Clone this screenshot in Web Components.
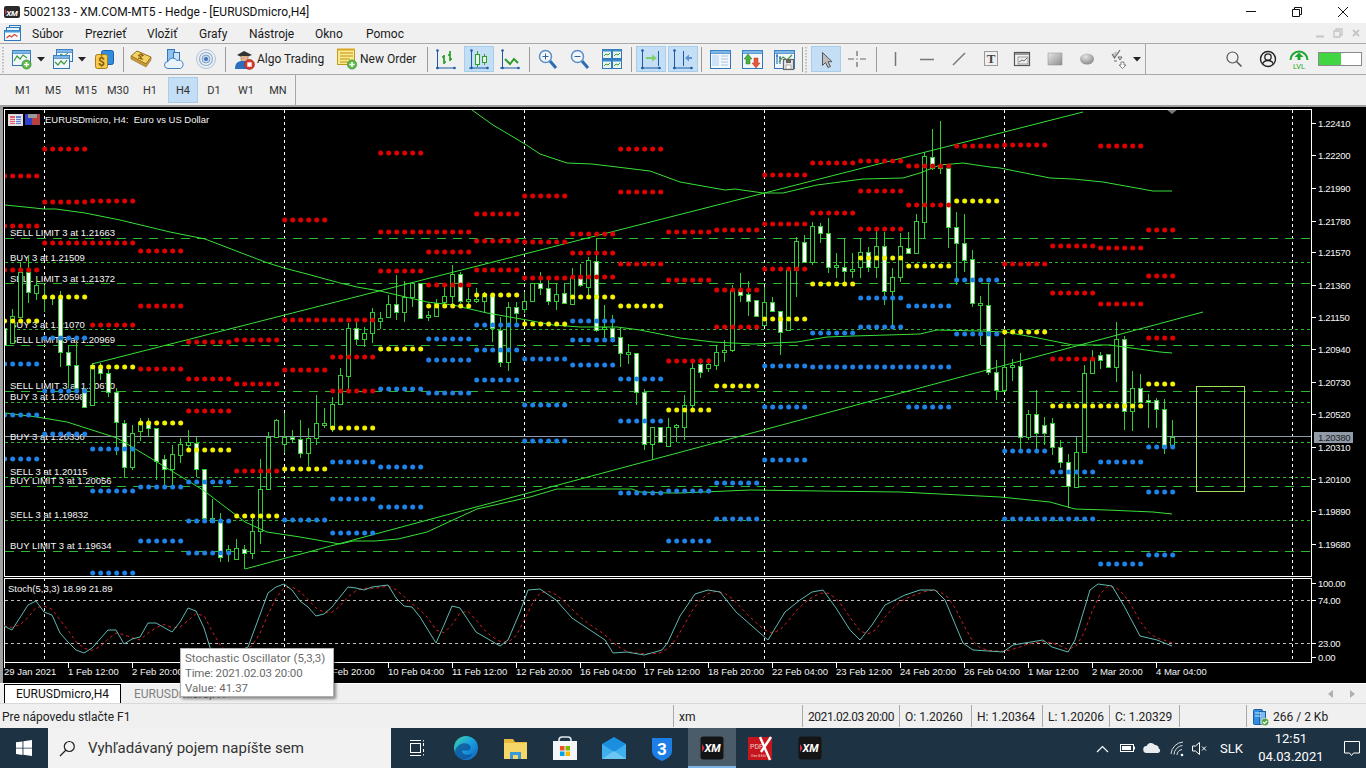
<!DOCTYPE html>
<html lang="sk">
<head>
<meta charset="utf-8">
<title>XM.COM-MT5</title>
<style>
html,body{margin:0;padding:0;width:1366px;height:768px;overflow:hidden;background:#f0f0f0;font-family:Roboto,"Noto Sans",sans-serif;}
#app{display:flex;flex-direction:column;width:1366px;height:768px;}
</style>
</head>
<body>
<div id="app">
  <title-bar></title-bar>
  <menu-bar></menu-bar>
  <tool-bar></tool-bar>
  <tf-bar></tf-bar>
  <mt-chart></mt-chart>
  <tab-bar></tab-bar>
  <status-bar></status-bar>
  <task-bar></task-bar>
</div>
<script>
const UI='Roboto,"Noto Sans",sans-serif';
const CH='"Liberation Sans",sans-serif';

/* ---------- icons ---------- */
const grad=(id,a,b)=>`<defs><linearGradient id="${id}" x1="0" y1="0" x2="1" y2="1"><stop offset="0" stop-color="${a}"/><stop offset="1" stop-color="${b}"/></linearGradient></defs>`;
const axes=(x=3,y=19.5,c='#1c5aa6')=>`<path d="M${x}.5 2V${y}M1 ${y}H20" stroke="${c}" fill="none"/><circle cx="${x+.5}" cy="2.5" r="1.3" fill="${c}"/><circle cx="${x+.5}" cy="${y}" r="1.3" fill="${c}"/><circle cx="19.5" cy="${y}" r="1.3" fill="${c}"/>`;
const plus=(x,y)=>`<circle cx="${x}" cy="${y}" r="4.6" fill="#5cb948" stroke="#3f8f30" stroke-width=".7"/><path d="M${x-2.6} ${y}h5.2M${x} ${y-2.6}v5.2" stroke="#fff" stroke-width="1.6"/>`;
const win=(x,y,w,h,c='#2f76bb')=>`<rect x="${x+.5}" y="${y+.5}" width="${w}" height="${h}" fill="#f2f7fc" stroke="${c}"/><rect x="${x+.5}" y="${y+.5}" width="${w}" height="3" fill="#7db7e6" stroke="${c}" stroke-width=".6"/>`;
const I={
 newchart:`${win(1,2,18,15)}<path d="M3 13l3-5 3 3 3-4 4 3" stroke="#3d9a3a" fill="none" stroke-width="1.2"/>${plus(15.5,16.5)}`,
 profiles:`${win(4,1,16,12)}<path d="M6 9l3-3 3 2 4-3" stroke="#3d9a3a" fill="none"/>${win(1,7,16,13)}<path d="M3 14l3 3 3-4 3 3 3-4" stroke="#3d9a3a" fill="none" stroke-width="1.2"/>`,
 market:`<rect x="8.5" y="2.5" width="12" height="14" rx="2" fill="#2f8ee0" stroke="#1b5fa6"/><rect x="2.5" y="6.5" width="12" height="14" rx="2" fill="#f6cb52" stroke="#a97b12"/><text x="8.5" y="18" font-size="12" font-weight="700" text-anchor="middle" fill="#8a5c00" font-family="${CH}">$</text>`,
 book:`<path d="M1 8L7 3l14 6-5 7z" fill="#f3d264" stroke="#94701c"/><path d="M1 8l15 8 5-7v3l-5 7L1 11z" fill="#c9983a" stroke="#94701c" stroke-width=".6"/><path d="M8 8l3-2 2 1.500-3 1 2 2.500-4-1" stroke="#8a5a10" fill="none" stroke-width="1.2"/>`,
 cloud:`<rect x="4.5" y="1.5" width="7" height="12" fill="#8ec0ee" stroke="#2f76bb"/><rect x="10.5" y="4.5" width="6" height="10" fill="#cfe3f7" stroke="#2f76bb"/><path d="M5 20.5a3.5 3.5 0 0 1 0-7 5 5 0 0 1 9-1 4 4 0 0 1 3.5 8z" fill="#eaf3fb" stroke="#3f83c4"/>`,
 signal:`<circle cx="11" cy="11" r="9.5" fill="none" stroke="#a9c3e0"/><circle cx="11" cy="11" r="6.5" fill="none" stroke="#8fb0d6" stroke-width="1.2"/><circle cx="11" cy="11" r="4" fill="#c6d8ec" stroke="#7f9fc9"/><circle cx="11" cy="11" r="2" fill="#3d73b8"/>`,
 algo:`<path d="M4 7l7-4 8 4-8 3z" fill="#333"/><path d="M8 8v4a4 4 0 0 0 7 0V8" fill="#e0b48a" stroke="#8a6a4a" stroke-width=".5"/><path d="M2 21c0-6 3-8 7-8h3c3 0 5 2 5 8z" fill="#2c6fc0"/><circle cx="16.5" cy="16.5" r="5" fill="#d33a2c" stroke="#a32417" stroke-width=".6"/><rect x="14.3" y="14.3" width="4.4" height="4.4" fill="#fff"/>`,
 order:`<rect x="1.5" y="1.5" width="17" height="15" fill="#fbe98c" stroke="#c29a1c"/><path d="M4 5h13M4 8h13M4 11h10M4 14h8" stroke="#b9911a"/><path d="M1 1.5h18" stroke="#d9a820" stroke-width="2"/>${plus(16,16.5)}`,
 bars:`${axes(2,20)}<path d="M9 7v9M7 9h2M9 14h2M15 3v10M13 7h2M15 11h2" stroke="#1d9a1d" stroke-width="1.6" fill="none"/>`,
 candles:`${axes(3,20)}<path d="M9.500 3v16M16.500 6v11" stroke="#2d9d2d"/><rect x="7.500" y="6.500" width="4" height="10" fill="#eaf6ea" stroke="#2d9d2d"/><rect x="14.500" y="8.500" width="4" height="6" fill="#eaf6ea" stroke="#2d9d2d"/>`,
 line:`${axes(3,20)}<path d="M6 11l5 5 4-5 4 4" stroke="#2d9d2d" stroke-width="2" fill="none"/>`,
 zin:`<path d="M13 13l6 7" stroke="#2b6cb6" stroke-width="3"/><circle cx="8.500" cy="8.500" r="6" fill="#f0f6fc" stroke="#5a8fc5" stroke-width="1.5"/><path d="M5.500 8.500h6M8.500 5.500v6" stroke="#3a5f8a"/>`,
 zout:`<path d="M13 13l6 7" stroke="#2b6cb6" stroke-width="3"/><circle cx="8.500" cy="8.500" r="6" fill="#f0f6fc" stroke="#5a8fc5" stroke-width="1.500"/><path d="M5.500 8.500h6" stroke="#3a5f8a"/>`,
 tile:`<g>${[[1,1],[11,1],[1,11],[11,11]].map(([x,y])=>`<rect x="${x+.5}" y="${y+.5}" width="9" height="9" fill="#eaf4ec" stroke="#2f76bb"/><rect x="${x+.5}" y="${y+.5}" width="9" height="2" fill="#3b8ac9"/><path d="M${x+2} ${y+7}l2-2 2 1 2-2" stroke="#3d9a3a" fill="none"/>`).join('')}</g>`,
 auto:`${axes(2,20)}<path d="M18.500 3v15" stroke="#1c5aa6"/><path d="M6 9h6V6.500l5 3.500-5 3.500V11H6z" fill="#7fd06a"/>`,
 shift:`${axes(2,20)}<path d="M11.500 3v15" stroke="#1c5aa6"/><path d="M20 9h-3V6.500L13 10l4 3.500V11h3z" fill="#5a94d8"/>`,
 data:`${win(1,2,20,18)}<rect x="3" y="7" width="7" height="11" fill="#cfe3f7"/><path d="M12 8h7M12 11h7M12 14h7M12 17h7" stroke="#a8c4de"/>`,
 updown:`${win(1,2,20,18)}<path d="M5 16v-5H3l4-5 4 5H9v5z" fill="#4fae3c" stroke="#2e7d22" stroke-width=".5"/><path d="M13 10v5h-2l4 5 4-5h-2v-5z" fill="#e8563a" stroke="#b23a22" stroke-width=".5"/>`,
 save:`${win(1,2,20,18)}<path d="M4 6v10M3 8h2M7 8v8M6 10h2" stroke="#1c5aa6" fill="none"/><path d="M6 14l4-5 4 3 5-5" stroke="#3d9a3a" fill="none" stroke-width="1.2"/><rect x="10.500" y="11.500" width="10" height="10" fill="#e8e8e8" stroke="#666" stroke-width="1.200"/><rect x="13" y="12" width="5" height="3" fill="#666"/><rect x="13" y="17" width="5" height="4" fill="#fff" stroke="#666" stroke-width=".5"/>`,
 cursor:`<path d="M7.500 4.500v13l3-3 2.500 5 2.500-1-2.500-4.800h4z" fill="#bdbdbd" stroke="#555"/>`,
 cross:`<path d="M11 3v5M11 14v5M2 11h6M14 11h6" stroke="#666" stroke-width="1.200"/><path d="M11 10v2" stroke="#888"/>`,
 vline:`<path d="M11.500 4v14" stroke="#777" stroke-width="1.500"/>`,
 hline:`<path d="M4 11.500h14" stroke="#777" stroke-width="1.500"/>`,
 trend:`<path d="M5 17L17 5" stroke="#777" stroke-width="1.500"/>`,
 ttext:`<rect x="4.500" y="3.500" width="13" height="14" fill="none" stroke="#444" stroke-dasharray="1 1"/><text x="11" y="15" font-size="13" font-weight="700" text-anchor="middle" fill="#444" font-family="'Liberation Serif',serif">T</text>`,
 label:`<rect x="2.500" y="4.500" width="15" height="13" fill="#f4f4f4" stroke="#555" stroke-width="1.200"/><rect x="3" y="5" width="14" height="2" fill="#999"/><rect x="6" y="9" width="10" height="7" fill="#eee" stroke="#666" stroke-width=".6"/><path d="M7 14l3-2 2 1 3-3" stroke="#333" fill="none" stroke-width=".7"/>`,
 rect:`${grad('rg','#e6e6e6','#8d8d8d')}<rect x="4" y="5" width="14" height="12" fill="url(#rg)" stroke="#8a8a8a" stroke-width=".5"/>`,
 ellipse:`<defs><radialGradient id="eg" cx=".4" cy=".3" r=".8"><stop offset="0" stop-color="#e4e4e4"/><stop offset="1" stop-color="#808080"/></radialGradient></defs><ellipse cx="11" cy="11" rx="7" ry="5.500" fill="url(#eg)"/>`,
 arrows:`<path d="M4 6l2.500 4L12 2" stroke="#666" fill="none" stroke-width="1.100"/><path d="M10 9l2 3 2-3z M6 13h3" stroke="#666" fill="none"/><path d="M13 17v-3h3v3h2l-3.500 3.500L11 17z" fill="#fff" stroke="#666" stroke-width=".8"/><path d="M7 9v-3h3v0l-1.500-2L5 6z" fill="none" stroke="#888" stroke-width=".6"/>`,
 caret:`<path d="M1 9h8l-4 4.500z" fill="#222"/>`,
 grip:`<path d="M1 3v26" stroke="#b0b0b0" stroke-dasharray="1.500 1.500" stroke-width="1.500" fill="none"/>`,
 search:`<circle cx="9.500" cy="9.500" r="5.500" fill="none" stroke="#555" stroke-width="1.200"/><path d="M13.500 13.500l5 5" stroke="#555" stroke-width="1.600"/>`,
 user:`<circle cx="11" cy="11" r="7.500" fill="none" stroke="#222" stroke-width="1.400"/><circle cx="11" cy="9" r="3.200" fill="none" stroke="#222" stroke-width="1.300"/><path d="M5.500 16c1-2.500 3-3.500 5.500-3.500s4.500 1 5.500 3.500" fill="none" stroke="#222" stroke-width="1.300"/>`,
 lvl:`<path d="M2.500 12a8.500 8.500 0 0 1 17 0" fill="none" stroke="#1fa52e" stroke-width="2"/><path d="M11 4.500l4.500 4.500h-3v3h-3V9h-3z" fill="#1fa52e"/><text x="11" y="20.500" font-size="7.500" text-anchor="middle" fill="#1fa52e" font-family="${CH}">LVL</text>`,
 xmsmall:`<rect x="1" y="1" width="16" height="12" rx="2" fill="#2a2a2a"/><text x="9" y="10.500" font-size="8" font-weight="700" font-style="italic" text-anchor="middle" fill="#fff" font-family="${CH}">XM</text><path d="M2 4l2 3-2 3z" fill="#e03030"/>`,
 mt:`<rect x="5.500" y=".500" width="11" height="8" fill="#eaf3fb" stroke="#2f76bb"/><rect x="2.500" y="2.500" width="13" height="9" fill="#eaf3fb" stroke="#2f76bb"/><rect x=".500" y="5.500" width="16" height="10" fill="#f6fafd" stroke="#2f76bb"/><rect x=".500" y="5.500" width="16" height="2" fill="#4b9ad8"/><path d="M2.500 13l3-2.500 2 1.500 3-2.500 3 2" stroke="#d0442c" fill="none" stroke-width="1.100"/>`,
 srv:`<rect x="1.500" y="1.500" width="9" height="15" rx="1" fill="#2f8ee0" stroke="#1b5fa6"/><rect x="7.500" y="3.500" width="6" height="13" fill="#7ab8ee" stroke="#1b5fa6"/><path d="M3 5h6M3 8h6" stroke="#cfe6fb"/><circle cx="13" cy="14" r="3.800" fill="#53a13f" stroke="#f3f3f3" stroke-width=".6"/><path d="M11 14l1.500 1.500L15 13" stroke="#fff" fill="none" stroke-width="1.100"/>`,
 windows:`<path d="M0 2.300l6.500-.9v6.300H0zM7.400 1.300L16 0v7.700H7.400zM0 8.600h6.500v6.300L0 14zM7.400 8.600H16V16l-8.600-1.200z" fill="#fff"/>`,
 mag:`<circle cx="10.300" cy="6.500" r="5" fill="none" stroke="#222" stroke-width="1.200"/><path d="M7 10L1 16" stroke="#222" stroke-width="1.300"/>`,
 taskview:`<rect x="3.500" y="5.500" width="10" height="9" fill="none" stroke="#fff"/><path d="M3 2.500h11M3 17.500h11M16.500 5v3M16.500 11v3" stroke="#fff"/><path d="M16.500 2v1.500M16.500 16v1.500" stroke="#fff" opacity=".8"/>`,
 edge:`<defs><linearGradient id="ed" x1="0" y1="0" x2="1" y2="1"><stop offset="0" stop-color="#3bd6a8"/><stop offset=".5" stop-color="#1b9de2"/><stop offset="1" stop-color="#0f5fb4"/></linearGradient></defs><circle cx="12" cy="12" r="12" fill="url(#ed)"/><path d="M1 15c2-7 9-9 13-7 3 1.500 3.500 5 1 6.500H8c0 4 5 6 11 3-3 5-9 7-13 5-4-2-6-5-5-7.500z" fill="#0d4f97" opacity=".75"/>`,
 folder:`<path d="M0 3h9l2 3h12v17H0z" fill="#e8b93a"/><rect x="0" y="7" width="23" height="16" fill="#f6d667"/><rect x="6" y="16" width="11" height="7" fill="#3a9ad9"/><rect x="9" y="19" width="5" height="4" fill="#f6d667"/>`,
 store:`<path d="M6 6V3.500A3 3 0 0 1 9 1h6a3 3 0 0 1 3 2.500V6" fill="none" stroke="#dfe6ec" stroke-width="1.600"/><rect x="0" y="5" width="24" height="19" fill="#f4f6f8"/><rect x="7" y="10" width="4.500" height="4.500" fill="#f25022"/><rect x="12.500" y="10" width="4.500" height="4.500" fill="#7fba00"/><rect x="7" y="15.500" width="4.500" height="4.500" fill="#00a4ef"/><rect x="12.500" y="15.500" width="4.500" height="4.500" fill="#ffb900"/>`,
 mail:`<path d="M0 8L12 1l12 7v15H0z" fill="#1a8fe0"/><path d="M0 8l12 8 12-8v15H0z" fill="#3fb0ec"/><path d="M0 23l12-8 12 8z" fill="#6cc6f3"/>`,
 shield:`<path d="M1 2h20v13c0 5-5 8-10 10C6 23 1 20 1 15z" fill="#1d7fe6"/><text x="11" y="18.500" font-size="17" font-weight="700" text-anchor="middle" fill="#fff" font-family="${CH}">3</text>`,
 xm:`<rect x=".500" y=".500" width="23" height="23" rx="3" fill="#141414"/><text x="12.500" y="15.500" font-size="11" font-weight="700" font-style="italic" text-anchor="middle" fill="#fff" font-family="${CH}">XM</text><path d="M2 8l2.500 4-2.500 4z" fill="#e03030"/>`,
 pdf:`<rect x="0" y="1" width="24" height="23" fill="#c4161c"/><text x="2" y="13" font-size="7" fill="#f8d0d0" font-family="${CH}">PDF</text><path d="M12 1l10 23M23 1l-10 15" stroke="#fff" stroke-width="2.400" fill="none"/><text x="3" y="21" font-size="3" fill="#f8d0d0" font-family="${CH}">View &amp; Edit</text>`,
 chev:`<path d="M1 8l5.500-5.500L12 8" fill="none" stroke="#fff" stroke-width="1.200"/>`,
 batt:`<rect x=".500" y=".500" width="13" height="7" fill="none" stroke="#fff"/><rect x="2" y="2" width="9" height="4" fill="#fff"/><rect x="14" y="2.500" width="1" height="3" fill="#fff"/>`,
 cld:`<path d="M4 11a3.500 3.500 0 0 1-.5-7A5 5 0 0 1 12 3a3.800 3.800 0 0 1 3.800 3.600A2.300 2.300 0 0 1 15 11z" fill="#e8ecef"/>`,
 wifi:`<path d="M1 13a13 13 0 0 1 12-12M4 13.500a9.500 9.500 0 0 1 8.500-9M7 14a6 6 0 0 1 5-5.500" fill="none" stroke="#d8dde0" stroke-width="1"/><circle cx="12" cy="14" r="1.300" fill="#fff"/>`,
 spk:`<path d="M.5 4h3l4-3.500v12L3.500 9h-3z" fill="none" stroke="#fff"/><path d="M10 4.500l4 4M14 4.500l-4 4" stroke="#fff"/>`,
 action:`<path d="M.5 .5h15v11.500H9.500L7.500 14.500 5.500 12H.5z" fill="none" stroke="#fff"/>`,
 arrowL:`<path d="M6 1v8L1 5z" fill="#b0b0b0"/>`,
 arrowR:`<path d="M1 1v8l5-4z" fill="#b0b0b0"/>`
};
customElements.define('mt-icon',class extends HTMLElement{
  connectedCallback(){
    const s=+this.getAttribute('size')||22,w=+this.getAttribute('w')||s,h=+this.getAttribute('h')||s,vb=this.getAttribute('vb')||`0 0 ${w} ${h}`;
    this.attachShadow({mode:'open'}).innerHTML=`<style>:host{display:block;width:${w}px;height:${h}px;line-height:0}svg{display:block;overflow:visible}</style><svg xmlns="http://www.w3.org/2000/svg" width="${w}" height="${h}" viewBox="${vb}">${I[this.getAttribute('name')]||''}</svg>`;
  }
});

/* ---------- title bar ---------- */
customElements.define('title-bar',class extends HTMLElement{
  connectedCallback(){
    this.attachShadow({mode:'open'}).innerHTML=`<style>
      :host{display:flex;align-items:center;height:23px;background:#fff;font:12px ${UI};color:#111;flex:none}
      .ic{margin:0 2px 0 3px}
      .t{flex:1;white-space:nowrap;letter-spacing:.04px;padding-top:1px}
      .c{width:46px;height:23px;display:flex;align-items:center;justify-content:center}
      svg{display:block}
    </style>
    <mt-icon class="ic" name="xmsmall" w="18" h="14"></mt-icon>
    <span class="t">5002133 - XM.COM-MT5 - Hedge - [EURUSDmicro,H4]</span>
    <div class="c"><svg width="12" height="12"><path d="M1 5.500h10" stroke="#111"/></svg></div>
    <div class="c"><svg width="12" height="12"><path d="M1.500 3.500h7v7h-7zM3.500 3.500v-2h7v7h-2" fill="none" stroke="#111"/></svg></div>
    <div class="c"><svg width="12" height="12"><path d="M1 1l10 10M11 1L1 11" stroke="#111"/></svg></div>`;
  }
});

/* ---------- menu bar ---------- */
customElements.define('menu-item',class extends HTMLElement{
  connectedCallback(){
    this.attachShadow({mode:'open'}).innerHTML=`<style>:host{display:block;width:${this.getAttribute('w')}px;flex:none;padding-top:1px}</style><slot></slot>`;
  }
});
customElements.define('menu-bar',class extends HTMLElement{
  connectedCallback(){
    const it=[['Súbor',53],['Prezrieť',62],['Vložiť',52],['Grafy',50],['Nástroje',66],['Okno',51],['Pomoc',60]];
    this.attachShadow({mode:'open'}).innerHTML=`<style>
      :host{display:flex;align-items:center;height:20px;background:#f0f0f0;border-bottom:1px solid #a8a8a8;font:12px ${UI};color:#1a1a1a;flex:none}
      .ic{margin:0 11px 0 4px;}
      .r{margin-left:auto;display:flex;gap:8px;padding-right:5px;align-items:center}
      svg{display:block}
    </style>
    <mt-icon class="ic" name="mt" w="17" h="16"></mt-icon>
    ${it.map(([t,w])=>`<menu-item w="${w}">${t}</menu-item>`).join('')}
    <div class="r">
      <svg width="10" height="10"><path d="M1 8.500h8" stroke="#c4c4c4" stroke-width="2"/></svg>
      <svg width="10" height="10"><path d="M1 3h6v6H1z M3 3V1h6v6H7" fill="none" stroke="#c4c4c4" stroke-width="1.300"/></svg>
      <svg width="10" height="10"><path d="M2 2l6 6M8 2l-6 6" stroke="#c4c4c4" stroke-width="1.800"/></svg>
    </div>`;
  }
});

/* ---------- toolbar ---------- */
customElements.define('tool-btn',class extends HTMLElement{
  connectedCallback(){
    const a=this.hasAttribute('active');
    this.attachShadow({mode:'open'}).innerHTML=`<style>
      :host{display:flex;align-items:center;justify-content:${this.hasAttribute('txt')?'flex-start':'center'};flex:none;height:26px;box-sizing:border-box;width:${this.getAttribute('w')}px;margin-left:${this.getAttribute('ml')}px;
        ${a?'background:#c3def5;border:1px solid #a6cdec;':''}}
    </style><slot></slot>`;
  }
});
customElements.define('tool-bar',class extends HTMLElement{
  connectedCallback(){
    const L=[['grip',3,2],['newchart',22,24],['caret',41,10],['profiles',63,24],['caret',81.500,10],['market',104,24],['|',123],['book',141,24],['cloud',174,24],['signal',206,24],['|',225],
      ['algo',0,93,'Algo Trading',233],['order',0,83,'New Order',336],['|',427],['bars',446,24],['candles',479,30,'a'],['line',510,24],['|',529],['zin',548,24],['zout',580,24],['tile',612,24],['|',631],
      ['auto',651,30,'a'],['shift',683,30,'a'],['|',701],['data',720,24],['updown',752,24],['save',784,24],['|',802],['grip',806,2],['cursor',826,30,'a'],['cross',857,24],['|',876],
      ['vline',895,24],['hline',927,24],['trend',959,24],['ttext',991,24],['label',1023,24],['rect',1055,24],['ellipse',1087,24],['arrows',1119,24],['caret',1137,10]];
    let pos=0,html='';
    for(const it of L){
      const [n,c,w,x,lx]=it;
      if(n==='|'){html+=`<i class="sep" style="margin-left:${c-pos}px"></i>`;pos=c+1;continue;}
      if(lx){html+=`<tool-btn txt w="${w}" ml="${lx-pos}"><mt-icon name="${n}"></mt-icon><span class="l">${x}</span></tool-btn>`;pos=lx+w;continue;}
      const left=c-w/2;
      const ic=n==='caret'?`<mt-icon name="caret" w="10" h="22"></mt-icon>`:n==='grip'?`<mt-icon name="grip" w="2" h="30"></mt-icon>`:`<mt-icon name="${n}"></mt-icon>`;
      html+=`<tool-btn w="${w}" ml="${left-pos}"${x==='a'?' active':''}>${ic}</tool-btn>`;pos=left+w;
    }
    this.attachShadow({mode:'open'}).innerHTML=`<style>
      :host{display:flex;align-items:center;height:30px;background:#f0f0f0;border-bottom:1px solid #a8a8a8;font:12px ${UI};color:#222;flex:none}
      .strip{display:flex;align-items:center;width:1146px;height:30px;border-right:1px solid #a8a8a8;box-sizing:border-box;flex:none}
      .sep{display:block;width:1px;height:25px;background:#9a9a9a;flex:none}
      .l{margin-left:2px;white-space:nowrap}
      .r{display:flex;align-items:center;flex:none}
      .lvlbar{width:42px;height:12px;border:1px solid #8a8a8a;background:linear-gradient(90deg,#41d641 0 52%,#fff 52%);margin-left:8px;box-sizing:content-box}
    </style>
    <div class="strip">${html}</div>
    <div class="r">
      <mt-icon name="search" style="margin-left:77px"></mt-icon>
      <mt-icon name="user" style="margin-left:12px"></mt-icon>
      <mt-icon name="lvl" style="margin-left:9px"></mt-icon>
      <div class="lvlbar"></div>
    </div>`;
  }
});

/* ---------- timeframes ---------- */
customElements.define('tf-btn',class extends HTMLElement{
  connectedCallback(){
    const a=this.hasAttribute('active');
    this.attachShadow({mode:'open'}).innerHTML=`<style>:host{display:flex;align-items:center;justify-content:center;box-sizing:border-box;flex:none;width:${this.getAttribute('w')||32}px;height:26px;${a?'background:#c3def5;border:1px solid #a6cdec;':''}}</style><slot></slot>`;
  }
});
customElements.define('tf-bar',class extends HTMLElement{
  connectedCallback(){
    this.attachShadow({mode:'open'}).innerHTML=`<style>
      :host{display:block;height:30px;background:#f0f0f0;font:11px ${UI};color:#333;flex:none}
      .s{display:flex;align-items:center;height:30px;width:296px;box-sizing:border-box;border-right:1px solid #a8a8a8;padding-left:8px}
      .g{margin-left:2px}
      tf-btn[active]{margin-left:2px;margin-right:0}
    </style><div class="s">
    <tf-btn w="30">M1</tf-btn><tf-btn w="30">M5</tf-btn><tf-btn class="g">M15</tf-btn><tf-btn>M30</tf-btn><tf-btn>H1</tf-btn><tf-btn w="30" active>H4</tf-btn><tf-btn>D1</tf-btn><tf-btn>W1</tf-btn><tf-btn>MN</tf-btn></div>`;
  }
});

/* ---------- chart ---------- */
const CANDLES=`4 328 328 345 345 w
12 309 316 343 344 o
20 262 272 317 317 o
28 255 272 292 303 w
36 278 285 293 300 o
44 285 296 298 312 o
52 295 296 298 305 o
60 291 297 352 367 w
68 345 352 365 388 w
76 342 365 388 392 w
84 388 389 407 408 w
92 363 365 405 405 o
100 363 367 373 380 w
108 370 373 392 397 w
116 388 392 422 455 w
124 420 423 467 478 w
132 425 433 467 470 o
140 418 422 431 441 o
148 418 422 428 437 w
156 428 428 461 480 w
164 455 459 469 485 w
172 445 454 469 485 o
180 438 444 455 463 o
188 430 442 445 452 o
196 437 443 469 477 w
204 469 469 518 520 w
212 499 518 522 522 w
220 513 522 557 562 w
228 545 549 551 562 o
236 539 548 559 559 o
244 545 549 553 569 w
252 518 531 553 559 o
260 459 489 531 544 o
268 432 437 489 490 o
276 419 420 437 437 o
284 413 437 444 453 o
292 430 437 439 443 w
300 420 439 453 458 w
308 428 438 453 466 o
316 395 423 438 445 o
324 408 423 425 428 o
332 397 404 427 432 o
340 368 375 404 404 o
348 323 328 376 390 o
356 322 328 339 345 w
364 327 333 339 347 o
372 308 312 333 343 o
380 312 318 321 329 o
388 295 304 317 318 o
396 275 304 312 320 w
404 281 297 312 322 o
412 282 283 297 307 o
420 283 283 318 318 w
428 311 315 317 321 o
436 299 303 316 316 o
444 287 296 302 307 o
452 265 274 296 307 o
460 272 274 301 303 w
468 288 299 301 307 o
476 288 299 301 303 o
484 292 296 301 313 o
492 295 295 328 342 w
500 317 330 362 367 w
508 302 307 362 371 o
516 302 307 313 325 w
524 292 301 309 313 o
532 283 283 301 301 o
540 272 283 288 295 w
548 278 288 301 305 w
556 283 294 301 310 o
564 283 293 303 303 w
572 268 277 304 304 o
580 264 278 285 287 w
588 257 260 287 298 o
596 238 261 330 332 w
604 305 327 329 340 o
612 315 328 337 338 w
620 328 337 353 367 w
628 344 352 354 364 o
636 353 353 392 405 w
644 389 392 444 450 w
652 427 427 444 460 o
660 427 427 442 442 w
668 418 427 446 446 o
676 424 425 427 442 o
684 395 405 427 440 o
692 362 368 405 410 o
700 358 364 372 378 w
708 358 364 368 372 o
716 345 352 365 370 o
724 340 350 352 362 o
732 285 290 350 352 o
740 273 290 295 302 w
748 281 294 301 316 w
756 300 300 316 316 w
764 287 302 325 325 o
772 297 302 311 312 w
780 311 311 332 355 w
788 270 270 330 330 o
796 237 241 270 297 o
804 235 242 262 262 w
812 222 226 262 265 o
820 223 226 233 243 w
828 218 233 267 273 w
836 253 265 267 278 o
844 238 267 271 282 w
852 253 269 271 278 o
860 238 252 267 278 o
868 247 252 267 272 w
876 227 246 267 278 o
884 232 246 291 305 w
892 268 277 291 328 o
900 233 246 277 282 o
908 232 248 253 253 w
916 214 221 253 254 o
924 152 156 222 238 o
932 129 157 168 170 w
940 121 166 168 174 o
948 168 168 227 248 w
956 212 227 243 285 w
964 214 243 260 272 w
972 250 259 303 307 w
980 296 303 305 345 o
988 283 305 372 375 w
996 360 372 390 400 w
1004 338 367 390 392 o
1012 359 365 367 381 o
1020 353 366 437 452 w
1028 410 414 437 440 o
1036 390 414 433 450 w
1044 417 425 433 445 w
1052 418 423 447 455 w
1060 440 447 462 468 w
1068 454 462 486 508 w
1076 437 452 487 487 o
1084 365 373 452 453 o
1092 350 360 373 373 o
1100 352 355 360 369 w
1108 354 354 367 368 w
1116 322 339 367 382 o
1124 336 339 411 430 w
1132 371 388 411 431 o
1140 374 388 402 402 w
1148 394 400 402 428 w
1156 398 400 409 428 w
1164 399 409 447 454 w
1172 420 437 445 445 o`.split('\n').map(l=>l.split(' '));

const DOTS={
R:[[44.7,149],[4.7,176,5],[44.7,202],[92.7,201],[4.7,226,5],[44.7,243,12],[140.7,251],[4.7,270,5],[140.7,306],[92.7,325],[188.7,342],[236.7,340],[284.7,220],[284.7,320],[140.7,369],[188.7,379],[236.7,384],[284.7,370],[188.7,411],[236.7,471],
 [332.7,320],[332.7,357],[332.7,391],[380.7,153],[620.7,149],[524.7,196],[620.7,192],[476.7,214],[380.7,232,12],[572.7,234],[668.7,232],[476.7,241],[524.7,242],[428.7,252],[572.7,253],[620.7,264],[476.7,270],[380.7,271],[668.7,280],[524.7,278],[572.7,277],[428.7,285],[668.7,361],
 [716.7,230],[764.7,175],[812.7,163],[860.7,161],[908.7,166],[956.7,146],[1004.7,145],[860.7,191],[908.7,205],[812.7,213],[764.7,224],[860.7,229],[764.7,269],[716.7,290],[716.7,327],
 [1100.7,146],[1148.7,230,4],[1052.7,246],[1100.7,248],[1004.7,264],[1148.7,276,4],[1052.7,293],[1100.7,304],[1148.7,338,4],[1052.7,359]],
Y:[[44.7,297],[4.7,321,5],[92.7,367],[140.7,423],[188.7,450],[332.7,428],[236.7,516],[284.7,469],[476.7,295],[572.7,297],[428.7,306],[620.7,306],[524.7,324],[380.7,349],[668.7,410],[716.7,386],
 [860.7,258],[908.7,266],[956.7,201],[812.7,284],[764.7,319],[1004.7,332],[1148.7,384,4],[1052.7,406,12]],
B:[[44.7,338],[4.7,364,5],[44.7,391],[4.7,415,5],[44.7,434],[92.7,449],[4.7,459,5],[332.7,462],[140.7,487],[188.7,482],[92.7,491],[332.7,499],[188.7,521],[284.7,520],[140.7,541],[188.7,553],[332.7,533],[92.7,573],
 [476.7,325],[572.7,321],[428.7,339],[572.7,340],[476.7,350],[428.7,360],[524.7,359],[572.7,365],[620.7,379],[476.7,380],[380.7,389],[428.7,393],[524.7,405],[620.7,421],[524.7,441],[380.7,467],[620.7,493],[668.7,491],[380.7,507],[668.7,541],
 [956.7,280],[860.7,298],[908.7,306],[860.7,327],[812.7,333],[956.7,334],[764.7,366],[812.7,367],[860.7,367],[908.7,367],[764.7,407],[908.7,407],[764.7,460],[716.7,483],[716.7,519],
 [1148.7,447,4],[1004.7,451],[1100.7,462],[1052.7,472],[1148.7,492,4],[1004.7,519,12],[1148.7,555,4],[1100.7,564]]
};
const DCOL={R:'#e00000',Y:'#f2f200',B:'#1e82e6'};
const P_TL1='92,364 1083,112', P_TL2='245,569 1203,312';
const C1='5,205 25,207 44,209 56,209 85,213 120,220 170,232 205,239 265,262 284,268 307,274 340,283 357,287 380,291 427,302 453,305 487,313 527,320 553,325 580,327 617,327 640,330 680,338 713,342 753,344 797,342 827,337 853,336 887,335 920,334 937,330 980,331 1005,332 1033,337 1073,345 1110,345 1160,352 1172,353';
const C2='472,110 493,125 525,144 540,154 567,163 592,164 650,171 680,182 725,190 735,189 763,193 783,193 817,185 863,179 903,178 920,173 940,165 963,163 990,167 1000,168 1050,178 1073,179 1103,182 1153,191 1172,191';
const C3='5,413 37,417 67,422 117,438 157,462 203,490 245,522 267,532 300,537 340,544 353,541 375,541 398,539 427,532 453,520 477,509 530,497 557,489 632,489 640,492 668,493 680,493 750,490 820,491 900,492 1000,497 1050,502 1075,509 1107,510 1153,512 1172,514';
const ST=[[4,626],[12,630],[28,605],[36,601],[44,612],[52,615],[60,633],[68,642],[76,650],[84,653],[92,648],[108,630],[116,630],[124,644],[132,639],[140,637],[148,623],[156,623],[172,632],[180,622],[188,608],[196,611],[204,628],[212,654],[220,652],[236,652],[248,647],[268,593],[276,587],[284,584],[292,590],[300,601],[308,607],[316,616],[324,614],[332,607],[348,587],[356,588],[364,590],[372,587],[388,585],[396,598],[404,606],[412,607],[420,617],[428,630],[436,643],[444,625],[452,606],[460,608],[476,632],[500,646],[508,640],[520,612],[528,590],[540,589],[556,600],[572,618],[590,630],[605,640],[613,653],[627,652],[644,655],[662,650],[668,642],[680,616],[695,594],[708,590],[720,592],[736,612],[752,626],[768,640],[785,612],[800,600],[812,592],[823,590],[836,608],[850,630],[860,640],[872,625],[885,605],[905,595],[920,590],[935,590],[945,600],[963,643],[973,650],[1003,652],[1013,645],[1043,640],[1052,647],[1068,652],[1075,640],[1090,590],[1098,584],[1112,586],[1124,606],[1140,636],[1157,640],[1172,646]];
function stAt(x){for(let i=1;i<ST.length;i++){if(x<=ST[i][0]){const [a,b]=ST[i-1],[c,d]=ST[i];return b+(d-b)*(x-a)/(c-a);}}return 646;}
const AXIS=[['1.22410',123],['1.22200',155],['1.21990',188],['1.21780',221],['1.21570',252],['1.21360',285],['1.21150',317],['1.20940',349],['1.20730',382],['1.20520',414],['1.20310',447],['1.20100',479],['1.19890',511],['1.19680',544]];
const LABELS=[['SELL LIMIT 3 at 1.21663',232],['BUY 3 at 1.21509',257],['SELL LIMIT 3 at 1.21372',278],['BUY 3 at 1.21070',324],['SELL LIMIT 3 at 1.20969',339],['SELL LIMIT 3 at 1.20670',385],['BUY 3 at 1.20598',396],['BUY 3 at 1.20330',436.5],['SELL 3 at 1.20115',471],['BUY LIMIT 3 at 1.20056',480],['SELL 3 at 1.19832',514],['BUY LIMIT 3 at 1.19634',545]];
const HL=[[238,'l'],[262,'s'],[283,'l'],[329,'s'],[345,'l'],[391,'l'],[402,'s'],[442,'s'],[477,'s'],[486,'l'],[520,'s'],[551,'l']];
/* 4 Feb and 5 Feb labels are wholly behind the tooltip in the reference */
const XL=[['29 Jan 2021',4],['1 Feb 12:00',68],['2 Feb 20:00',132],['8 Feb 20:00',324],['10 Feb 04:00',388],['11 Feb 12:00',452],['12 Feb 20:00',516],['16 Feb 04:00',580],['17 Feb 12:00',644],['18 Feb 20:00',708],['22 Feb 04:00',772],['23 Feb 12:00',836],['24 Feb 20:00',900],['26 Feb 04:00',964],['1 Mar 12:00',1028],['2 Mar 20:00',1092],['4 Mar 04:00',1156]];

customElements.define('mt-chart',class extends HTMLElement{
  connectedCallback(){
    const G='#32cd32',GL='#2eb82e';
    let s='';
    s+=`<rect x="0" y="105" width="1366" height="579" fill="#000"/><rect x="0" y="105" width="1366" height="2" fill="#a0a0a0"/><rect x="0" y="105" width="3" height="579" fill="#a0a0a0"/><rect x="0" y="683" width="1366" height="1" fill="#fff"/>`;
    s+=`<defs><clipPath id="pl"><rect x="5" y="110" width="1307" height="466"/></clipPath></defs>`;
    s+=`<g font-family='${CH}' font-size="9.500" fill="#f4f4f4">`;
    for(const x of [44,284,524,764,1004,1292]) s+=`<path d="M${x}.5 110V662" stroke="#fff" stroke-dasharray="3 3" shape-rendering="crispEdges"/>`;
    for(const y of [600,643]) s+=`<path d="M5 ${y}.5H1312" stroke="#bdbdbd" stroke-dasharray="3 3" shape-rendering="crispEdges"/>`;
    s+='<g clip-path="url(#pl)">';
    for(const [y,t] of HL) s+=`<path d="M5 ${y}.5H1310" stroke="${GL}" stroke-dasharray="${t==='l'?'9 7':'3 3'}" shape-rendering="crispEdges"/>`;
    s+=`<path d="M5 436.500H1312" stroke="#909aa8" shape-rendering="crispEdges"/>`;
    for(const [t,y] of LABELS) s+=`<text x="10" y="${y+3.5}">${t}</text>`;
    for(const [x,wt,bt,bb,wb,t] of CANDLES){
      const X=+x;
      s+=`<path d="M${X+.5} ${wt}V${wb}" stroke="${G}" shape-rendering="crispEdges"/><rect x="${X-1.5}" y="${+bt+.5}" width="4" height="${Math.max(bb-bt,1)}" fill="${t==='w'?'#fff':'#000'}" stroke="${G}" shape-rendering="crispEdges"/>`;
    }
    for(const p of [C1,C2,C3,P_TL1,P_TL2]) s+=`<polyline points="${p}" fill="none" stroke="#38e038"/>`;
    s+=`<rect x="1196.500" y="386.500" width="48" height="105" fill="none" stroke="#a4e05a"/>`;
    for(const k in DOTS) for(const [x,y,n=6] of DOTS[k]) for(let i=0;i<n;i++) s+=`<circle cx="${x+8*i}" cy="${y}" r="2.500" fill="${DCOL[k]}"/>`;
    s+='</g>';
    s+=`<path d="M1166 109h12l-6 5z" fill="#777"/>`;
    s+=`<rect x="4.500" y="109.500" width="1307" height="467" fill="none" stroke="#fff" shape-rendering="crispEdges"/><rect x="4.500" y="578.500" width="1307" height="84" fill="none" stroke="#fff" shape-rendering="crispEdges"/>`;
    for(const [t,y] of AXIS) s+=`<path d="M1312 ${y}.5h4" stroke="#fff" shape-rendering="crispEdges"/><text x="1318" y="${y+3.5}" letter-spacing="-.3">${t}</text>`;
    s+=`<rect x="1314" y="432" width="39" height="11" fill="#909aa8"/><text x="1318" y="441" fill="#222" letter-spacing="-.3">1.20380</text>`;
    for(const [t,y] of [['100.00',583],['74.00',600],['23.00',643],['0.00',657]]) s+=`<path d="M1312 ${y}.5h4" stroke="#fff" shape-rendering="crispEdges"/><text x="1318" y="${y+3.5}" letter-spacing="-.3">${t}</text>`;
    for(const x of [196,260]) s+=`<path d="M${x}.5 662v6" stroke="#fff" shape-rendering="crispEdges"/>`;
    for(const [t,x] of XL) s+=`<path d="M${x}.5 662v6" stroke="#fff" shape-rendering="crispEdges"/><text x="${x}" y="675">${t}</text>`;
    s+=`<text x="45" y="122.500" xml:space="preserve" style="white-space:pre">EURUSDmicro, H4:  Euro vs US Dollar</text>`;
    s+=`<text x="8" y="591.500">Stoch(5,3,3) 18.99 21.89</text>`;
    const xs=[],m=[];for(let x=4;x<=1172;x+=8){xs.push(x);m.push(stAt(x));}
    const sig=m.map((v,i)=>(v+m[Math.max(i-1,0)]+m[Math.max(i-2,0)])/3);
    s+=`<polyline points="${xs.map((x,i)=>x+','+sig[i].toFixed(1)).join(' ')}" fill="none" stroke="#d02020" stroke-dasharray="3 3"/>`;
    s+=`<polyline points="${ST.map(p=>p.join(',')).join(' ')}" fill="none" stroke="#5fb8b0"/>`;
    s+='</g>';
    s+=`<g shape-rendering="crispEdges"><rect x="8.500" y="114.500" width="14" height="11" fill="#e8e0f0" stroke="#ddd"/><rect x="10" y="116" width="5" height="8" fill="#e06060"/><rect x="16" y="116" width="5" height="8" fill="#6080d0"/><path d="M10 118h11M10 120h11M10 122h11" stroke="#fff" stroke-width=".7"/><rect x="25" y="114" width="7" height="11" fill="#3040c8"/><rect x="32" y="114" width="8" height="11" fill="#b84040"/><rect x="28" y="114" width="9" height="4" fill="#999"/></g>`;
    this.attachShadow({mode:'open'}).innerHTML=`<style>
      :host{display:block;position:relative;z-index:2;width:1366px;height:579px;flex:none;background:#000}
      svg{display:block}
    </style>
    <svg xmlns="http://www.w3.org/2000/svg" width="1366" height="579" viewBox="0 105 1366 579">${s}</svg>
    <mt-tooltip style="left:180px;top:543px"></mt-tooltip>`;
  }
});
customElements.define('mt-tooltip',class extends HTMLElement{
  connectedCallback(){
    this.attachShadow({mode:'open'}).innerHTML=`<style>
      :host{position:absolute;display:flex;flex-direction:column;justify-content:center;box-sizing:border-box;width:154px;height:49px;padding:2px 4px 0;background:#fff;border:1px solid #b0b0b0;box-shadow:2px 2px 3px rgba(0,0,0,.45);font:11.500px/15px ${UI};color:#6a6a6a;white-space:nowrap}
      .d{letter-spacing:-.15px}
    </style><div>Stochastic Oscillator (5,3,3)</div><div class="d">Time: 2021.02.03 20:00</div><div>Value: 41.37</div>`;
  }
});

/* ---------- tabs ---------- */
customElements.define('tab-bar',class extends HTMLElement{
  connectedCallback(){
    this.attachShadow({mode:'open'}).innerHTML=`<style>
      :host{display:flex;align-items:stretch;height:20px;background:#f0f0f0;border-bottom:1px solid #d8d8d8;font:12px ${UI};flex:none;box-sizing:border-box;padding-left:3px}
      .a{width:117px;box-sizing:border-box;margin-left:1px;background:#fff;border:1px solid #000;border-bottom:none;display:flex;align-items:center;justify-content:center;color:#111}
      .b{margin-left:13px;display:flex;align-items:center;color:#808080}
      .n{margin-left:auto;display:flex;align-items:center;gap:15px;padding-right:10px}
    </style><div class="a">EURUSDmicro,H4</div><div class="b">EURUSDmicro,H1</div>
    <div class="n"><mt-icon name="arrowL" w="7" h="10"></mt-icon><mt-icon name="arrowR" w="7" h="10"></mt-icon></div>`;
  }
});

/* ---------- status ---------- */
customElements.define('status-cell',class extends HTMLElement{
  connectedCallback(){
    const first=this.hasAttribute('first');
    this.attachShadow({mode:'open'}).innerHTML=`<style>:host{display:flex;align-items:center;flex:none;box-sizing:border-box;width:${this.getAttribute('w')}px;height:22px;padding-left:${first?2:5}px;padding-top:1px;white-space:nowrap;${first?'':'border-left:1px solid #a8a8a8;'}${this.hasAttribute('tight')?'letter-spacing:-.45px;':''}}</style><slot></slot>`;
  }
});
customElements.define('status-bar',class extends HTMLElement{
  connectedCallback(){
    this.attachShadow({mode:'open'}).innerHTML=`<style>
      :host{display:flex;align-items:flex-end;height:24px;background:#f0f0f0;font:12px ${UI};color:#222;flex:none;box-sizing:border-box;padding-bottom:1px}
    </style>
    <status-cell first w="673">Pre nápovedu stlačte F1</status-cell>
    <status-cell w="129">xm</status-cell>
    <status-cell w="97" tight>2021.02.03 20:00</status-cell>
    <status-cell w="72">O: 1.20260</status-cell>
    <status-cell w="71">H: 1.20364</status-cell>
    <status-cell w="67">L: 1.20206</status-cell>
    <status-cell w="70">C: 1.20329</status-cell>
    <status-cell w="67"></status-cell>
    <status-cell w="120"><mt-icon name="srv" w="18" h="18"></mt-icon><span style="margin-left:3px">266 / 2 Kb</span></status-cell>`;
  }
});

/* ---------- taskbar ---------- */
customElements.define('task-item',class extends HTMLElement{
  connectedCallback(){
    const a=this.hasAttribute('active');
    this.attachShadow({mode:'open'}).innerHTML=`<style>:host{display:flex;align-items:center;justify-content:center;flex:none;width:48px;height:40px;box-sizing:border-box;margin-left:${this.getAttribute('ml')||0}px;${a?'background:#4a5b69;border-bottom:2px solid #7db4e6;padding-top:2px;':''}}</style><slot></slot>`;
  }
});
customElements.define('task-bar',class extends HTMLElement{
  connectedCallback(){
    const tray=(n,w,h,ml)=>`<mt-icon name="${n}" w="${w}" h="${h}" style="margin-left:${ml}px"></mt-icon>`;
    this.attachShadow({mode:'open'}).innerHTML=`<style>
      :host{display:flex;align-items:center;height:40px;background:#1d3344;flex:none;font:12px ${UI};color:#fff}
      .w{width:48px;height:40px;display:flex;align-items:center;justify-content:center;flex:none}
      .s{width:343px;height:40px;box-sizing:border-box;background:#f2f2f2;display:flex;align-items:center;padding-left:11px;color:#333;font-size:15px;flex:none;white-space:nowrap}
      .s span{margin-left:12px}
      .tray{display:flex;align-items:center;margin-left:262px;flex:none}
      .clk{width:66px;text-align:center;line-height:18px;margin-left:15px;font-size:13px;flex:none}
      .lang{margin-left:13px;font-size:13px}
    </style>
    <div class="w"><mt-icon name="windows" w="16" h="16"></mt-icon></div>
    <div class="s"><mt-icon name="mag" w="17" h="17"></mt-icon><span>Vyhľadávaný pojem napíšte sem</span></div>
    <task-item ml="1"><mt-icon name="taskview" w="18" h="20"></mt-icon></task-item>
    <task-item ml="2"><mt-icon name="edge" w="24" h="24"></mt-icon></task-item>
    <task-item ml="2"><mt-icon name="folder" w="24" h="24"></mt-icon></task-item>
    <task-item ml="1"><mt-icon name="store" w="24" h="24"></mt-icon></task-item>
    <task-item ml="1"><mt-icon name="mail" w="24" h="24"></mt-icon></task-item>
    <task-item><mt-icon name="shield" w="22" h="25"></mt-icon></task-item>
    <task-item ml="2" active><mt-icon name="xm" w="24" h="24"></mt-icon></task-item>
    <task-item><mt-icon name="pdf" w="24" h="24"></mt-icon></task-item>
    <task-item ml="2"><mt-icon name="xm" w="24" h="24"></mt-icon></task-item>
    <div class="tray">
      ${tray('chev',13,9,0)}${tray('batt',15,8,11)}${tray('cld',17,12,8)}${tray('wifi',14,15,10)}${tray('spk',15,13,8)}
      <span class="lang">SLK</span>
      <div class="clk">12:51<br>04.03.2021</div>
      ${tray('action',16,15,20)}
    </div>`;
  }
});
</script>
</body>
</html>
